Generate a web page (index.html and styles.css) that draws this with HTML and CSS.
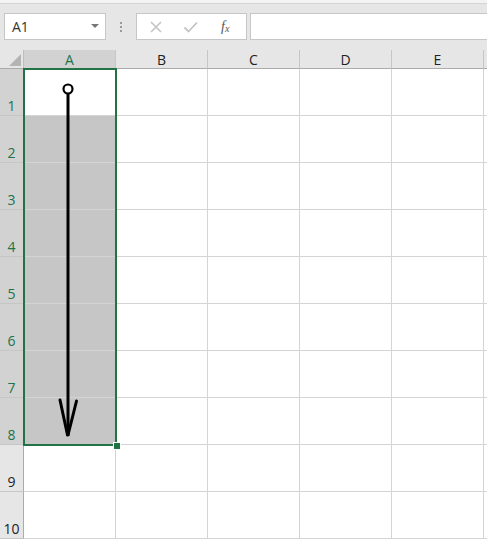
FILE: index.html
```html
<!DOCTYPE html>
<html>
<head>
<meta charset="utf-8">
<link rel="stylesheet" href="styles.css">
</head>
<body>
<div class="app">
  <div class="topstrip"></div>
  <div class="fbar">
    <div class="namebox"><span class="ref">A1</span><span class="dd"></span></div>
    <div class="dots"><i></i><i></i><i></i></div>
    <div class="btns">
      <svg class="ic" width="14" height="14" viewBox="0 0 14 14"><path d="M2 2 L12 12 M12 2 L2 12" stroke="#c4c4c4" stroke-width="1.6" fill="none"/></svg>
      <svg class="ic" width="16" height="14" viewBox="0 0 16 14"><path d="M1.5 7.5 L5.5 11.5 L14 2.5" stroke="#c4c4c4" stroke-width="1.8" fill="none"/></svg>
      <span class="fx">f<sub>x</sub></span>
    </div>
    <div class="formula"></div>
  </div>
  <div class="sheet">
    <div class="grid">
      <div class="corner"><span class="tri"></span></div>
      <div class="ch sel">A</div><div class="ch">B</div><div class="ch">C</div><div class="ch">D</div><div class="ch">E</div><div class="ch last"></div>

      <div class="rh sel">1</div><div class="c active"></div><div class="c"></div><div class="c"></div><div class="c"></div><div class="c"></div><div class="c last"></div>
      <div class="rh sel">2</div><div class="c hi"></div><div class="c"></div><div class="c"></div><div class="c"></div><div class="c"></div><div class="c last"></div>
      <div class="rh sel">3</div><div class="c hi"></div><div class="c"></div><div class="c"></div><div class="c"></div><div class="c"></div><div class="c last"></div>
      <div class="rh sel">4</div><div class="c hi"></div><div class="c"></div><div class="c"></div><div class="c"></div><div class="c"></div><div class="c last"></div>
      <div class="rh sel">5</div><div class="c hi"></div><div class="c"></div><div class="c"></div><div class="c"></div><div class="c"></div><div class="c last"></div>
      <div class="rh sel">6</div><div class="c hi"></div><div class="c"></div><div class="c"></div><div class="c"></div><div class="c"></div><div class="c last"></div>
      <div class="rh sel">7</div><div class="c hi"></div><div class="c"></div><div class="c"></div><div class="c"></div><div class="c"></div><div class="c last"></div>
      <div class="rh sel">8</div><div class="c hi"></div><div class="c"></div><div class="c"></div><div class="c"></div><div class="c"></div><div class="c last"></div>
      <div class="rh">9</div><div class="c"></div><div class="c"></div><div class="c"></div><div class="c"></div><div class="c"></div><div class="c last"></div>
      <div class="rh">10</div><div class="c"></div><div class="c"></div><div class="c"></div><div class="c"></div><div class="c"></div><div class="c last"></div>
    </div>
    <div class="selbox"></div>
    <div class="handle"></div>
    <svg class="arrow" width="120" height="400" viewBox="0 0 120 400">
      <circle cx="68" cy="39" r="4.5" stroke="#000" stroke-width="2.2" fill="none"/>
      <path d="M68 43.5 L68 386" stroke="#000" stroke-width="3" fill="none"/>
      <path d="M60 350 L67.5 385 M76.5 351 L68 385" stroke="#000" stroke-width="3" fill="none" stroke-linecap="round"/>
    </svg>
  </div>
</div>
</body>
</html>
```

FILE: styles.css
```css
html, body {
  margin: 0;
  padding: 0;
  background: #e6e6e6;
  overflow: hidden;
}
.app {
  width: 487px;
  height: 540px;
  font-family: "Open Sans", "Liberation Sans", sans-serif;
}
.topstrip {
  height: 3px;
  background: #f3f3f3;
  border-bottom: 1px solid #d4d4d4;
}
.fbar {
  display: flex;
  align-items: flex-start;
  height: 46px;
  padding-top: 9px;
  padding-left: 4px;
  box-sizing: border-box;
}
.namebox {
  width: 102px;
  height: 27px;
  box-sizing: border-box;
  background: #fff;
  border: 1px solid #c6c6c6;
  display: flex;
  align-items: center;
  justify-content: space-between;
  padding: 0 6px 0 7px;
}
.ref {
  font-size: 14px;
  color: #333;
}
.dd {
  width: 0;
  height: 0;
  border-left: 4px solid transparent;
  border-right: 4px solid transparent;
  border-top: 4px solid #777;
  margin-top: -1px;
}
.dots {
  width: 30px;
  height: 27px;
  display: flex;
  flex-direction: column;
  align-items: center;
  justify-content: center;
  gap: 2px;
}
.dots i {
  display: block;
  width: 2px;
  height: 2px;
  background: #9a9a9a;
}
.btns {
  width: 111px;
  height: 27px;
  box-sizing: border-box;
  background: #fff;
  border: 1px solid #c6c6c6;
  display: flex;
  align-items: center;
  padding-left: 12px;
  gap: 20px;
}
.fx {
  font-family: "Liberation Serif", serif;
  font-style: italic;
  font-size: 14px;
  color: #555;
  margin-left: 2px;
}
.fx sub {
  font-size: 10px;
  vertical-align: 0;
  position: relative;
  top: 1px;
}
.formula {
  margin-left: 3px;
  flex: 1;
  height: 27px;
  box-sizing: border-box;
  background: #fff;
  border: 1px solid #c6c6c6;
  border-right: none;
}
.sheet {
  position: relative;
  width: 487px;
  height: 490px;
  background: #fff;
}
.grid {
  display: grid;
  grid-template-columns: 24px repeat(5, 92px) 3px;
  grid-template-rows: 19px repeat(10, 47px);
}
.grid > div {
  box-sizing: border-box;
}
.corner {
  background: #e6e6e6;
  border-right: 1px solid #bdbdbd;
  border-bottom: 1px solid #ababab;
  position: relative;
}
.tri {
  position: absolute;
  right: 2px;
  bottom: 2px;
  width: 0;
  height: 0;
  border-left: 12px solid transparent;
  border-bottom: 12px solid #b4b4b4;
}
.ch {
  background: #e6e6e6;
  border-right: 1px solid #c6c6c6;
  border-bottom: 1px solid #ababab;
  font-size: 14px;
  color: #222;
  text-align: center;
  line-height: 19px;
}
.ch.sel {
  background: #d2d2d2;
  color: #217346;
}
.ch.last {
  border-right: none;
}
.rh {
  background: #e6e6e6;
  border-right: 1px solid #ababab;
  border-bottom: 1px solid #c6c6c6;
  font-size: 14px;
  color: #222;
  display: flex;
  align-items: flex-end;
  justify-content: center;
  line-height: 19px;
}
.rh.sel {
  background: #d2d2d2;
  color: #217346;
}
.c {
  background: #fff;
  border-right: 1px solid #d4d4d4;
  border-bottom: 1px solid #d4d4d4;
}
.c.hi {
  background: #c6c6c6;
}
.c.last {
  border-right: none;
}
.selbox {
  position: absolute;
  left: 23px;
  top: 18px;
  width: 94px;
  height: 378px;
  box-sizing: border-box;
  border: 2px solid #217346;
  pointer-events: none;
}
.handle {
  position: absolute;
  left: 113px;
  top: 392px;
  width: 6px;
  height: 6px;
  background: #217346;
  border: 1px solid #fff;
}
.arrow {
  position: absolute;
  left: 0;
  top: 0;
}
```
